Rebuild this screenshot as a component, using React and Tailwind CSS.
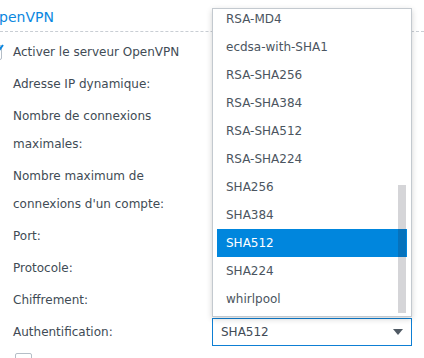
import React from 'react';

const options = [
  'RSA-MD4',
  'ecdsa-with-SHA1',
  'RSA-SHA256',
  'RSA-SHA384',
  'RSA-SHA512',
  'RSA-SHA224',
  'SHA256',
  'SHA384',
  'SHA512',
  'SHA224',
  'whirlpool',
];

const Label = ({ lines }) => (
  <div className="w-[199px] shrink-0 leading-[28px]">
    {lines.map((l) => (
      <div key={l}>{l}</div>
    ))}
  </div>
);

export default function App() {
  const selected = 'SHA512';

  return (
    <div
      className="relative w-[424px] h-[358px] overflow-hidden bg-white text-[12px] text-[#414b55]"
      style={{ fontFamily: '"DejaVu Sans", Verdana, sans-serif' }}
    >
      {/* Section title */}
      <div className="h-[32px] border-b border-dashed border-[#c9ced4]">
        <div className="ml-[-12px] pt-[9px] text-[14px] leading-[17px] text-[#0b87e0]">OpenVPN</div>
      </div>

      <div className="flex flex-col gap-[4px] pt-[6px] pl-[13px]">
        {/* Enable checkbox */}
        <div className="flex items-center h-[28px]">
          <div className="relative ml-[-26px] mr-[11px] w-[15px] h-[15px] rounded-[2px] border border-[#b5bec7] bg-white">
            <svg className="absolute left-[1px] top-[-3px]" width="16" height="16" viewBox="0 0 16 16">
              <path d="M3 8.5 L6.5 12 L14 2" fill="none" stroke="#0b87e0" strokeWidth="2" />
            </svg>
          </div>
          <span>Activer le serveur OpenVPN</span>
        </div>

        <div className="flex">
          <Label lines={['Adresse IP dynamique:']} />
        </div>
        <div className="flex">
          <Label lines={['Nombre de connexions', 'maximales:']} />
        </div>
        <div className="flex">
          <Label lines={['Nombre maximum de', "connexions d'un compte:"]} />
        </div>
        <div className="flex">
          <Label lines={['Port:']} />
        </div>
        <div className="flex">
          <Label lines={['Protocole:']} />
        </div>
        <div className="flex">
          <Label lines={['Chiffrement:']} />
        </div>
        <div className="flex items-center">
          <Label lines={['Authentification:']} />
          <div className="flex items-center justify-between w-[200px] h-[28px] border border-[#0e7fd4] pl-[8px] pr-[8px] text-[#414b55]">
            <span>{selected}</span>
            <svg width="10" height="6" viewBox="0 0 10 6">
              <path d="M0 0 H10 L5 6 Z" fill="#505a64" />
            </svg>
          </div>
        </div>
        <div className="flex items-center h-[28px] mt-[3px]">
          <div className="ml-[2px] w-[17px] h-[17px] rounded-[2px] border border-[#b5bec7] bg-white self-start" />
          <span className="ml-[10px] mt-[8px]">Activer la compression sur la liaison VPN</span>
        </div>
      </div>

      {/* Open dropdown list */}
      <div className="absolute left-[212px] top-[8px] w-[200px] h-[309px] overflow-hidden border border-[#c3c9cf] bg-white px-[4px] shadow-[0_2px_6px_rgba(0,0,0,0.18)]">
        <div className="mt-[-4px]">
          {options.map((o) => (
            <div
              key={o}
              className={`h-[28px] leading-[28px] pl-[9px] ${
                o === selected ? 'bg-[#0086dd] text-white' : 'text-[#4b5560]'
              }`}
            >
              {o}
            </div>
          ))}
        </div>
        <div className="absolute left-[185px] top-[176px] w-[8px] h-[128px] bg-[rgba(30,30,50,0.19)]" />
      </div>
    </div>
  );
}
